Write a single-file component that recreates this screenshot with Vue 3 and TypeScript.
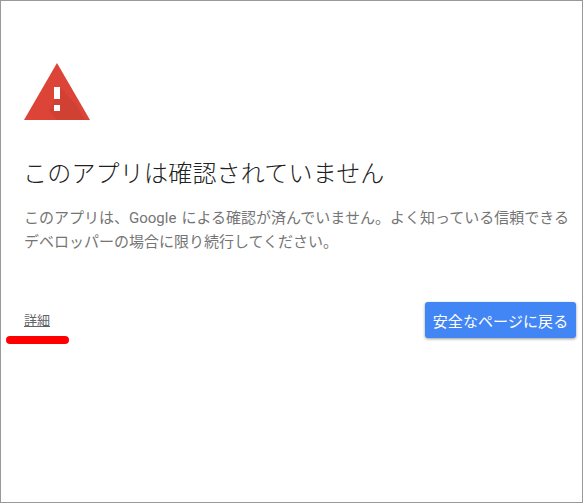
<script setup lang="ts">
const title: string = 'このアプリは確認されていません'
</script>

<template>
  <div class="window">
    <svg class="warn" width="66" height="58" viewBox="0 0 66 58" aria-hidden="true">
      <polygon points="33,0 66,57 0,57" fill="#DB4437" />
      <polygon points="36,24 52.500,42 61,57 33,57 25,48" fill="#B93A2B" opacity="0.3" />
      <rect x="30" y="24" width="6" height="12" fill="#fff" />
      <rect x="30" y="42" width="6" height="6" fill="#fff" />
    </svg>
    <h1 class="title">{{ title }}</h1>
    <p class="desc">このアプリは、Google による確認が済んでいません。よく知っている信頼できるデベロッパーの場合に限り続行してください。</p>
    <div class="actions">
      <a class="details">詳細</a>
      <button class="back">安全なページに戻る</button>
      <span class="mark"></span>
    </div>
  </div>
</template>

<style>
html, body { margin: 0; background: #fff; }
</style>

<style scoped>
.window {
  box-sizing: border-box;
  width: 583px;
  height: 503px;
  border: 1px solid #999;
  background: #fff;
  padding: 62px 6px 0 23px;
  font-family: Roboto, "Noto Sans CJK JP", sans-serif;
  overflow: hidden;
}
.warn { display: block; }
.title {
  margin: 37px 0 0 -1px;
  font-size: 24px;
  line-height: 32px;
  font-weight: 300;
  letter-spacing: 0.2px;
  color: #212121;
  white-space: nowrap;
}
.desc {
  margin: 16px 0 0;
  width: 550px;
  font-size: 15px;
  line-height: 24px;
  font-weight: 400;
  word-spacing: 1.5px;
  color: #757575;
}
.actions {
  position: relative;
  margin-top: 48px;
  display: flex;
  justify-content: space-between;
  align-items: center;
  height: 36px;
}
.details {
  margin-bottom: 2px;
  font-size: 13px;
  color: #5f6368;
  text-decoration: underline;
  cursor: pointer;
}
.back {
  width: 151px;
  height: 36px;
  border: 0;
  border-radius: 3px;
  background: #4285f4;
  color: #fff;
  font-family: inherit;
  font-size: 15px;
  letter-spacing: 0.1px;
  padding: 0;
  box-shadow: 0 1px 3px rgba(0, 0, 0, 0.4);
}
.mark {
  position: absolute;
  left: -18px;
  top: 34px;
  width: 63px;
  height: 8px;
  border-radius: 4px;
  background: #f00;
}
</style>
